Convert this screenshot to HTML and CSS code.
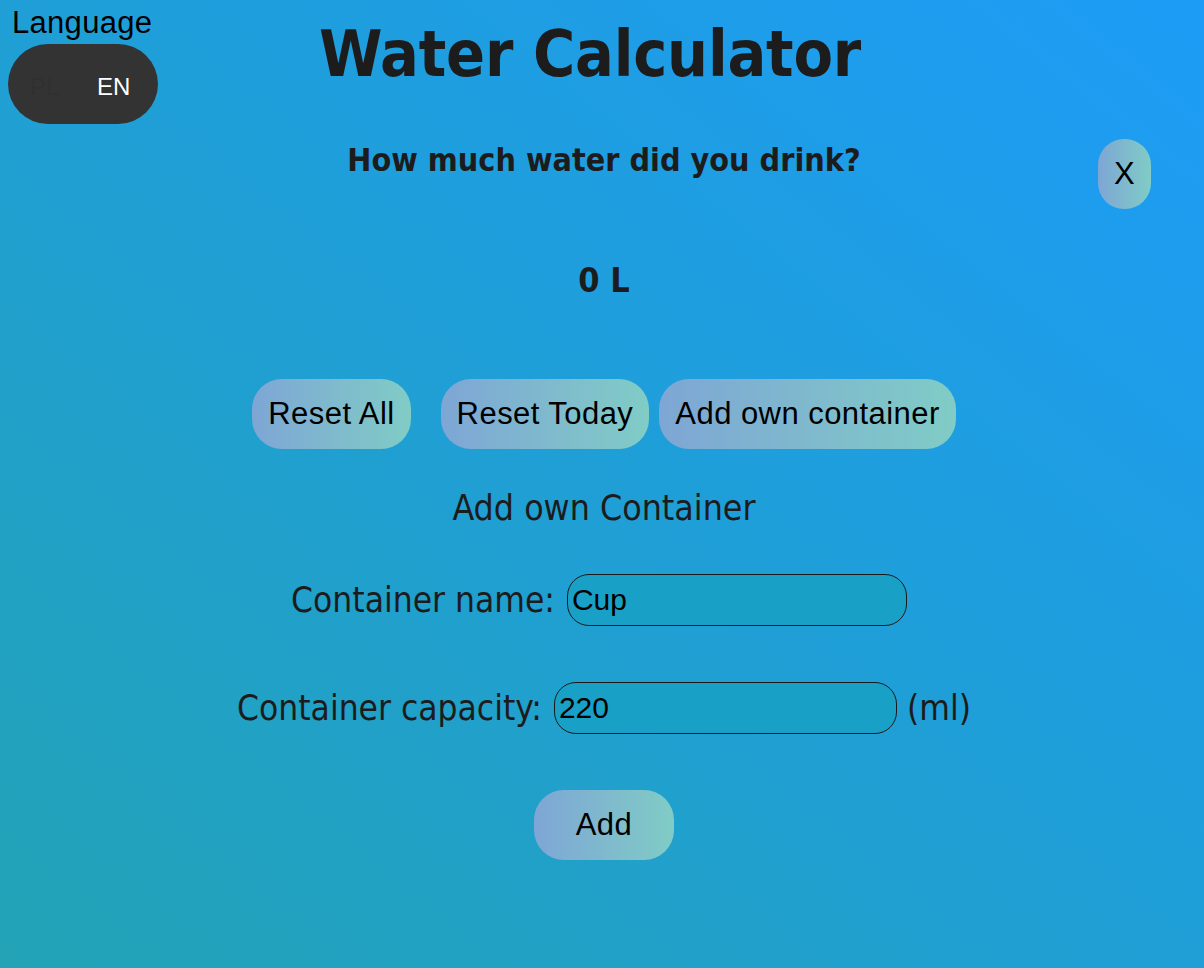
FILE: index.html
```html
<!DOCTYPE html>
<html lang="en">
<head>
<meta charset="utf-8">
<title>Water Calculator</title>
<link rel="stylesheet" href="styles.css">
</head>
<body>
<div class="lang">
  <div class="lang-label">Language</div>
  <div class="lang-toggle"><span class="lang-off">PL</span><span class="lang-on">EN</span></div>
</div>
<main class="app">
  <h1 class="title">Water Calculator</h1>
  <h2 class="question">How much water did you drink?</h2>
  <div class="total">0 L</div>
  <div class="actions">
    <button class="btn btn-wide-gap">Reset All</button>
    <button class="btn">Reset Today</button>
    <button class="btn">Add own container</button>
  </div>
  <section class="panel">
    <button class="btn close">X</button>
    <h3 class="panel-title">Add own Container</h3>
    <div class="field field-first">
      <label class="field-label" for="cname">Container name:</label>
      <input class="field-input" id="cname" type="text" value="Cup">
    </div>
    <div class="field">
      <label class="field-label" for="ccap">Container capacity:</label>
      <input class="field-input field-input-cap" id="ccap" type="text" value="220">
      <span class="unit">(ml)</span>
    </div>
    <button class="btn add">Add</button>
  </section>
</main>
</body>
</html>
```
FILE: styles.css
```css
html, body {
  margin: 0;
  padding: 0;
}
body {
  min-height: 968px;
  background: linear-gradient(to top right, #23a3b5 0%, #1f9fd6 50%, #1d9cf7 100%);
  font-family: "DejaVu Sans", Tahoma, sans-serif;
  font-stretch: condensed;
  color: #1c1c1c;
  position: relative;
}
.lang {
  position: absolute;
  left: 8px;
  top: 6px;
  display: flex;
  flex-direction: column;
  align-items: flex-start;
}
.lang-label {
  font-family: "Liberation Sans", Arial, sans-serif;
  font-stretch: normal;
  font-size: 31px;
  line-height: 34px;
  color: #000;
  margin-left: 4px;
  letter-spacing: 0.3px;
}
.lang-toggle {
  box-sizing: border-box;
  margin-top: 4px;
  width: 150px;
  height: 80px;
  padding-top: 6px;
  border-radius: 40px;
  background: #333333;
  display: flex;
  align-items: center;
  font-family: "Liberation Sans", Arial, sans-serif;
  font-stretch: normal;
  font-size: 24px;
}
.lang-off {
  color: #303030;
  margin-left: 22px;
  width: 67px;
}
.lang-on {
  color: #fff;
}
.app {
  display: flex;
  flex-direction: column;
  align-items: center;
  padding-left: 4px;
}
.title {
  margin: 14px 28px 0 0;
  font-size: 64px;
  line-height: 80px;
  font-weight: bold;
  letter-spacing: -0.2px;
}
.question {
  margin: 46px 0 0;
  font-size: 32px;
  line-height: 40px;
  font-weight: bold;
}
.total {
  margin-top: 80px;
  font-size: 34px;
  line-height: 40px;
  font-weight: bold;
}
.actions {
  margin-top: 79px;
  display: flex;
  gap: 10px;
}
.btn {
  font-family: "Liberation Sans", Arial, sans-serif;
  font-stretch: normal;
  font-size: 31px;
  letter-spacing: 0.45px;
  color: #000;
  height: 70px;
  padding: 0 16px;
  border: none;
  border-radius: 30px;
  background: linear-gradient(to right, #7ea6d5, #80ccc6);
}
.btn-wide-gap {
  margin-right: 20px;
}
.panel {
  display: flex;
  flex-direction: column;
  align-items: center;
  width: 100%;
}
.close {
  position: absolute;
  top: 139px;
  right: 53px;
  width: 53px;
  padding: 0;
  border-radius: 26px;
}
.panel-title {
  margin: 39px 0 0;
  font-size: 35.4px;
  line-height: 40px;
  font-weight: normal;
}
.field {
  margin-top: 56px;
  display: flex;
  align-items: center;
  height: 52px;
  font-size: 35px;
}
.field-first {
  margin-top: 46px;
  padding-right: 10px;
}
.field-label {
  margin-right: 12px;
}
.field-input {
  box-sizing: border-box;
  width: 340px;
  height: 52px;
  border: 1px solid #1a1a1a;
  border-radius: 22px;
  background: #18a0c6;
  font-family: "Liberation Sans", Arial, sans-serif;
  font-size: 30px;
  color: #000;
  padding: 0 4px;
  outline: none;
}
.field-input-cap {
  width: 343px;
}
.unit {
  margin-left: 10px;
}
.add {
  margin-top: 56px;
  width: 140px;
}
```
